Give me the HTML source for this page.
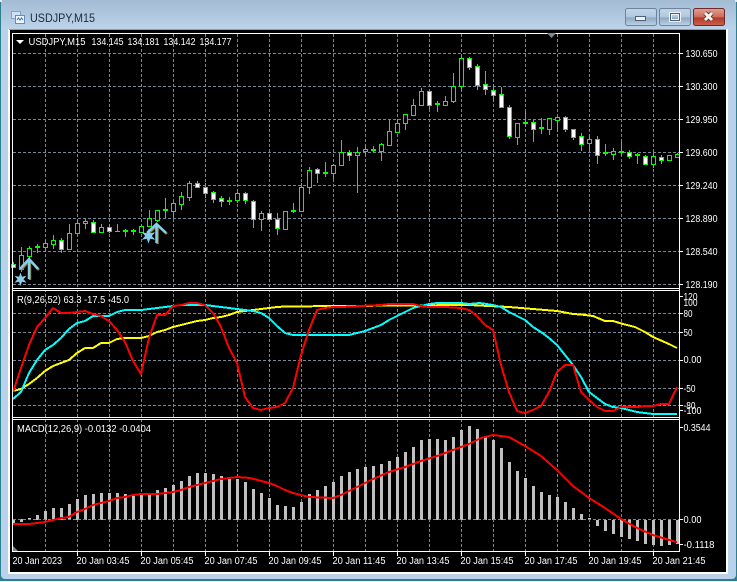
<!DOCTYPE html>
<html><head><meta charset="utf-8"><title>USDJPY,M15</title>
<style>
html,body{margin:0;padding:0;background:#b9d1ea}
svg{display:block}
text{font-family:"Liberation Sans",sans-serif;font-size:10px;fill:#fff}
</style></head><body>
<svg width="737" height="582" viewBox="0 0 737 582" xmlns="http://www.w3.org/2000/svg">
<defs>
<linearGradient id="tb" x1="0" y1="0" x2="0" y2="1"><stop offset="0" stop-color="#a3bcd4"/><stop offset="1" stop-color="#bcd3e9"/></linearGradient>
<linearGradient id="b1" x1="0" y1="0" x2="0" y2="1"><stop offset="0" stop-color="#c3d6e8"/><stop offset=".5" stop-color="#b0c8de"/><stop offset=".55" stop-color="#8fa9c4"/><stop offset="1" stop-color="#bcd2e6"/></linearGradient>
<linearGradient id="b2" x1="0" y1="0" x2="0" y2="1"><stop offset="0" stop-color="#e0a194"/><stop offset=".5" stop-color="#cf6a58"/><stop offset=".55" stop-color="#b3392a"/><stop offset="1" stop-color="#c9604d"/></linearGradient>
</defs>
<rect width="737" height="582" fill="#f0f0f0"/>
<rect x="0" y="0" width="737" height="581" fill="#2c7f8f"/>
<rect x="1" y="0" width="735" height="579" rx="4" fill="#b9d1ea"/>
<rect x="1" y="0" width="735" height="29" fill="url(#tb)"/>
<rect x="0" y="0" width="2" height="2" fill="#e8e8e8"/><rect x="735" y="0" width="2" height="2" fill="#e8e8e8"/>
<rect x="8" y="29" width="720" height="545" fill="#fff"/>
<rect x="9" y="29" width="717" height="1" fill="#8e9aa6"/>
<rect x="10" y="30" width="716" height="542" fill="#000"/>

<!-- title icon -->
<path d="M11.5 11.5h9v7h-9z" fill="#cfe2f5" stroke="#7fa5cc"/>
<path d="M15.5 15.500h9v8h-9z" fill="#eef5fc" stroke="#5f8fc0"/>
<path d="M17 20l1.500-2 1.500 2 1.500-2 1.500 2" fill="none" stroke="#3a74b0"/>
<text x="30" y="22" style="font-size:12px;fill:#1c2a38" textLength="65" lengthAdjust="spacingAndGlyphs">USDJPY,M15</text>

<!-- buttons -->
<rect x="625.5" y="8.5" width="31" height="17" rx="2" fill="url(#b1)" stroke="#6f849b"/>
<rect x="659.5" y="8.5" width="31" height="17" rx="2" fill="url(#b1)" stroke="#6f849b"/>
<rect x="693.5" y="8.5" width="31" height="17" rx="2" fill="url(#b2)" stroke="#6d2a2a"/>
<rect x="635.5" y="16.5" width="10" height="4" fill="#eef2f6" stroke="#4d5f73"/>
<rect x="670.5" y="13.5" width="9" height="7" fill="none" stroke="#eef2f6" stroke-width="3"/>
<rect x="670.5" y="13.5" width="9" height="7" fill="none" stroke="#4d5f73"/>
<path d="M705 13l7 7M712 13l-7 7" stroke="#5d2a24" stroke-width="4.5"/>
<path d="M705 13l7 7M712 13l-7 7" stroke="#f2f2f2" stroke-width="3"/>

<!-- grid -->
<g stroke="#778899" fill="none" stroke-dasharray="3 2">
<path d="M45.5 34V551M77.5 34V551M109.5 34V551M141.5 34V551M173.5 34V551M205.5 34V551M237.5 34V551M269.5 34V551M301.5 34V551M333.5 34V551M365.5 34V551M397.5 34V551M429.5 34V551M461.5 34V551M493.5 34V551M525.5 34V551M557.5 34V551M589.5 34V551M621.5 34V551M653.5 34V551"/>
<path d="M13 53.5H679M13 86.5H679M13 119.5H679M13 152.5H679M13 185.5H679M13 218.5H679M13 251.5H679M13 284.5H679"/>
<path d="M13 313.5H679M13 332.5H679M13 360.5H679M13 388.5H679M13 405.5H679"/>
<path d="M13 519.5H679"/>
</g>

<!-- wicks -->
<path stroke="#00ff00" fill="none" d="M13.5 262V268M21.5 247V272M29.5 246V258M37.5 244V253M45.5 240V252M53.5 235V249M61.5 238V253M69.5 224V250M77.5 220V234M85.5 219V229M93.5 220V233M101.5 224V233M109.5 225V233M117.5 224V232M125.5 229V237M133.5 229V235M141.5 225V233M149.5 210V227M157.5 210V222M165.5 198V218M173.5 202V218M181.5 192V210M189.5 181V201M197.5 181V187M205.5 183V198M213.5 191V203M221.5 196V207M229.5 197V205M237.5 192V203M245.5 192V204M253.5 200V228M261.5 211V231M269.5 212V220M277.5 213V235M285.5 211V230M293.5 203V213M301.5 183V211M309.5 167V194M317.5 168V183M325.5 162V177M333.5 164V179M341.5 140V165M349.5 150V161M357.5 147V193M365.5 145V155M373.5 146V152M381.5 143V161M389.5 120V146M397.5 120V133M405.5 114V130M413.5 99V116M421.5 88V105M429.5 91V109M437.5 101V112M445.5 96V106M453.5 73V103M461.5 57V90M469.5 57V70M477.5 64V90M485.5 71V95M493.5 85V102M501.5 87V107M509.5 105V139M517.5 123V145M525.5 111V127M533.5 120V142M541.5 118V134M549.5 118V135M557.5 116V132M565.5 116V132M573.5 129V140M581.5 133V151M589.5 135V150M597.5 136V164M605.5 144V156M613.5 148V160M621.5 142V156M629.5 150V159M637.5 153V164M645.5 155V164M653.5 153V168M661.5 155V164M669.5 155V161M677.5 153V157"/>
<!-- hollow bodies -->
<path fill="#000" stroke="#00ff00" d="M19.5 255.5h4v14h-4zM27.5 248.5h4v8h-4zM43.5 243.5h4v4h-4zM51.5 240.5h4v4h-4zM67.5 233.5h4v16h-4zM75.5 223.5h4v10h-4zM83.5 221.5h4v2h-4zM99.5 227.5h4v5h-4zM139.5 226.5h4v6h-4zM147.5 218.5h4v8h-4zM155.5 210.5h4v10h-4zM171.5 203.5h4v8h-4zM179.5 196.5h4v8h-4zM187.5 183.5h4v14h-4zM235.5 193.5h4v7h-4zM259.5 213.5h4v6h-4zM283.5 211.5h4v18h-4zM299.5 187.5h4v24h-4zM307.5 170.5h4v17h-4zM331.5 165.5h4v8h-4zM339.5 152.5h4v13h-4zM355.5 152.5h4v3h-4zM363.5 149.5h4v2h-4zM379.5 144.5h4v7h-4zM387.5 131.5h4v14h-4zM395.5 123.5h4v9h-4zM403.5 114.5h4v9h-4zM411.5 105.5h4v10h-4zM419.5 91.5h4v14h-4zM443.5 101.5h4v4h-4zM451.5 86.5h4v15h-4zM459.5 58.5h4v28h-4zM515.5 123.5h4v14h-4zM547.5 118.5h4v11h-4zM555.5 117.5h4v3h-4zM587.5 139.5h4v4h-4zM611.5 151.5h4v3h-4zM651.5 156.5h4v8h-4zM667.5 155.5h4v5h-4zM675.5 154.5h4v3h-4z"/>
<!-- white bodies -->
<path fill="#fff" stroke="#00ff00" d="M11.5 264.5h4v3h-4zM59.5 240.5h4v9h-4zM91.5 222.5h4v10h-4zM107.5 227.5h4v4h-4zM195.5 183.5h4v4h-4zM203.5 187.5h4v6h-4zM211.5 192.5h4v7h-4zM219.5 198.5h4v3h-4zM243.5 193.5h4v7h-4zM251.5 201.5h4v18h-4zM267.5 213.5h4v6h-4zM275.5 219.5h4v9h-4zM315.5 169.5h4v4h-4zM347.5 152.5h4v3h-4zM427.5 91.5h4v14h-4zM467.5 58.5h4v9h-4zM475.5 66.5h4v19h-4zM483.5 84.5h4v5h-4zM491.5 90.5h4v5h-4zM499.5 94.5h4v13h-4zM507.5 107.5h4v29h-4zM531.5 122.5h4v7h-4zM563.5 117.5h4v12h-4zM571.5 129.5h4v8h-4zM579.5 136.5h4v8h-4zM595.5 139.5h4v16h-4zM627.5 152.5h4v4h-4zM643.5 156.5h4v8h-4zM659.5 157.5h4v3h-4z"/>
<!-- ticks -->
<path fill="#00ff00" d="M35 246h5v2h-5zM115 231h5v1h-5zM123 230h5v2h-5zM131 230h5v2h-5zM163 209h5v2h-5zM227 200h5v2h-5zM291 210h5v2h-5zM323 172h5v2h-5zM371 149h5v2h-5zM435 103h5v2h-5zM523 122h5v2h-5zM539 127h5v2h-5zM603 152h5v2h-5zM619 151h5v2h-5zM635 154h5v2h-5z"/>

<!-- arrows -->
<g fill="none" stroke-width="2.5">
<g stroke="#8a7a3c" transform="translate(1,1)"><path d="M20 269L29 259L38 269M29 259V279"/><path d="M147 233L156.5 224L166 233M156.5 224V243"/></g>
<g stroke="#87ceeb"><path d="M20 269L29 259L38 269M29 259V279"/><path d="M147 233L156.5 224L166 233M156.5 224V243"/></g>
</g>
<path fill="#87ceeb" d="M20.5 272.5l1.5 4.3 4.5-1-3 3.4 3 3.4-4.5-.9-1.5 4.3-1.5-4.3-4.5.9 3-3.4-3-3.4 4.5 1z"/>
<path fill="#87ceeb" d="M148.5 228.5l1.7 4.8 5-1.1-3.4 3.8 3.4 3.8-5-1.1-1.7 4.8-1.7-4.8-5 1.1 3.4-3.8-3.4-3.8 5 1.1z"/>

<!-- RSI lines -->
<g fill="none" stroke-width="2" stroke-linejoin="round" shape-rendering="crispEdges">
<polyline stroke="#ffff00" points="13,391 21,389 29,384 37,378 45,371 53,366 61,363 69,360 77,353 85,348 93,348 101,343 109,343 117,339 125,338 133,338 141,338 149,336 157,332 165,330 173,327 181,325 189,323 197,321 205,320 213,318 221,317 229,315 237,312 245,311 253,310 261,309 269,308 277,307 285,306.5 341,306 469,305 509,307 533,309 557,311 573,314 581,314.5 593,316 605,321 613,321 623,324 635,327 645,332 653,337 669,344 677,348"/>
<polyline stroke="#00ffff" points="13,399 21,392 29,373 37,360 45,350 53,345 61,338 69,329 77,323 85,321 93,316 101,316 109,316 117,312 125,310 133,310 141,310 149,309 157,308 165,307 173,306 181,305 205,305 213,306 221,307 229,308 237,309 245,310 253,311 261,313 269,318 277,326 285,333 293,335 349,335 357,333 365,331 373,328 381,325 389,320 397,316 405,312 413,308 421,306 429,304 437,303 461,303 469,304 480,303 493,305 501,307 509,312 517,316 525,320 533,327 541,332 549,338 557,345 565,355 573,365 581,377 589,392 597,398 605,404 613,407 621,408 629,410 637,412 645,413 653,414 677,414"/>
<polyline stroke="#ff0000" points="13,392 21,368 29,345 37,327 45,318 53,308 61,313 69,313 77,312 85,311 93,314 101,316 109,321 117,330 125,342 133,361 141,374 149,338 157,315 165,315 173,306 181,305 189,303 197,303 205,305 213,313 221,327 229,348 237,363 245,397 253,408 261,410 269,408 277,407 285,403 293,388 301,355 309,330 317,310 325,308 333,307 341,307 381,305 389,304 413,304 421,306 429,307 445,307 461,308 469,310 477,316 485,325 493,330 501,365 509,392 517,411 525,413 533,410 541,406 549,392 557,372 565,365 573,365 581,392 589,400 597,407 605,411 613,411 621,407 637,407 645,406 653,406 661,404 669,404 677,387"/>
</g>

<!-- MACD bars -->
<path stroke="#c0c0c0" stroke-width="3" fill="none" d="M13.5 519V523M21.5 519V522M29.5 518V520M37.5 515V520M45.5 511V520M53.5 508V520M61.5 508V520M69.5 504V520M77.5 499V520M85.5 495V520M93.5 494V520M101.5 493V520M109.5 493V520M117.5 493V520M125.5 494V520M133.5 496V520M141.5 495V520M149.5 495V520M157.5 490V520M165.5 488V520M173.5 485V520M181.5 481V520M189.5 476V520M197.5 473V520M205.5 473V520M213.5 474V520M221.5 476V520M229.5 479V520M237.5 479V520M245.5 482V520M253.5 489V520M261.5 493V520M269.5 498V520M277.5 505V520M285.5 506V520M293.5 507V520M301.5 502V520M309.5 494V520M317.5 490V520M325.5 486V520M333.5 482V520M341.5 476V520M349.5 472V520M357.5 469V520M365.5 467V520M373.5 466V520M381.5 464V520M389.5 461V520M397.5 457V520M405.5 452V520M413.5 447V520M421.5 440V520M429.5 439V520M437.5 439V520M445.5 440V520M453.5 437V520M461.5 430V520M469.5 426V520M477.5 429V520M485.5 436V520M493.5 440V520M501.5 448V520M509.5 462V520M517.5 471V520M525.5 478V520M533.5 486V520M541.5 492V520M549.5 495V520M557.5 497V520M565.5 502V520M573.5 508V520M581.5 514V520M589.5 518V520M597.5 520V526M605.5 520V531M613.5 520V534M621.5 520V537M629.5 520V539M637.5 520V541M645.5 520V544M653.5 520V545M661.5 520V546M669.5 520V545M677.5 520V544"/>
<path stroke="#778899" stroke-dasharray="3 2" fill="none" d="M13 519.5H600"/>
<polyline fill="none" stroke="#ff0000" stroke-width="2" stroke-linejoin="round" shape-rendering="crispEdges" points="13,524 29,524 45,522 53,520 61,518 69,517 77,512 85,509 93,505 101,503 109,501 117,498 125,497 133,495 141,494 157,494 165,493 173,492 181,490 189,487 197,485 205,483 213,481 221,479 229,478 237,477 250,478 269,483 277,486 285,490 293,493 301,495 309,497 333,498 341,495 357,487 373,479 389,472 405,467 421,461 437,456 453,450 469,444 481,438 485,437 493,435 509,437 525,446 541,456 557,470 573,486 589,498 605,508 621,519 637,528 653,535 669,540 677,542"/>

<!-- frames -->
<rect x="10" y="288" width="716" height="3" fill="#000"/>
<rect x="10" y="417" width="716" height="3" fill="#000"/>
<path stroke="#fff" fill="none" d="M12.5 33.5H679.5V551.5H12.5ZM12 288.5H680M12 290.5H680M12 417.5H680M12 419.5H680"/>
<!-- ticks right -->
<path stroke="#fff" d="M680 53.5h3M680 86.5h3M680 119.5h3M680 152.5h3M680 185.5h3M680 218.5h3M680 251.5h3M680 284.5h3M680 296.5h3M680 313.5h3M680 332.5h3M680 360.5h3M680 388.5h3M680 405.5h3M680 410.5h3M680 427.5h3M680 519.5h3M680 544.5h3"/>
<path stroke="#fff" d="M77.5 552v4M141.5 552v4M205.5 552v4M269.5 552v4M333.5 552v4M397.5 552v4M461.5 552v4M525.5 552v4M589.5 552v4M653.5 552v4"/>
<!-- small triangles -->
<path fill="#778899" d="M547 33h9l-4.500 5z"/>
<path fill="#778899" d="M13 546l5 5h-5z"/>
<path fill="#fff" d="M16 40h8l-4 4z"/>

<!-- labels -->
<g lengthAdjust="spacingAndGlyphs">
<text x="28.500" y="45" textLength="57" lengthAdjust="spacingAndGlyphs">USDJPY,M15</text>
<text x="91.500" y="45" textLength="32" lengthAdjust="spacingAndGlyphs">134.145</text>
<text x="127.500" y="45" textLength="32" lengthAdjust="spacingAndGlyphs">134.181</text>
<text x="163.500" y="45" textLength="32" lengthAdjust="spacingAndGlyphs">134.142</text>
<text x="199.500" y="45" textLength="32" lengthAdjust="spacingAndGlyphs">134.177</text>
<text x="17" y="303" textLength="112" lengthAdjust="spacingAndGlyphs">R(9,26,52) 63.3 -17.5 -45.0</text>
<text x="17" y="432" textLength="134" lengthAdjust="spacingAndGlyphs">MACD(12,26,9) -0.0132 -0.0404</text>
<text x="685.500" y="57" textLength="32" lengthAdjust="spacingAndGlyphs">130.650</text>
<text x="685.500" y="90" textLength="32" lengthAdjust="spacingAndGlyphs">130.300</text>
<text x="685.500" y="123" textLength="32" lengthAdjust="spacingAndGlyphs">129.950</text>
<text x="685.500" y="156" textLength="32" lengthAdjust="spacingAndGlyphs">129.600</text>
<text x="685.500" y="189" textLength="32" lengthAdjust="spacingAndGlyphs">129.240</text>
<text x="685.500" y="222" textLength="32" lengthAdjust="spacingAndGlyphs">128.890</text>
<text x="685.500" y="255" textLength="32" lengthAdjust="spacingAndGlyphs">128.540</text>
<text x="685.500" y="288" textLength="32" lengthAdjust="spacingAndGlyphs">128.190</text>
<text x="683.500" y="300" textLength="14" lengthAdjust="spacingAndGlyphs">120</text>
<text x="683.500" y="306" textLength="14" lengthAdjust="spacingAndGlyphs">100</text>
<text x="683.500" y="317" textLength="9" lengthAdjust="spacingAndGlyphs">80</text>
<text x="683.500" y="336" textLength="9" lengthAdjust="spacingAndGlyphs">50</text>
<text x="683.500" y="363" textLength="18" lengthAdjust="spacingAndGlyphs">0.00</text>
<text x="683.500" y="392" textLength="12" lengthAdjust="spacingAndGlyphs">-50</text>
<text x="683.500" y="409" textLength="12" lengthAdjust="spacingAndGlyphs">-80</text>
<text x="683.500" y="414" textLength="18" lengthAdjust="spacingAndGlyphs">-100</text>
<text x="683.500" y="431" textLength="27" lengthAdjust="spacingAndGlyphs">0.3544</text>
<text x="683.500" y="523" textLength="18" lengthAdjust="spacingAndGlyphs">0.00</text>
<text x="683.500" y="548" textLength="31" lengthAdjust="spacingAndGlyphs">-0.1118</text>
<text x="12.500" y="564" textLength="49.500" lengthAdjust="spacingAndGlyphs">20 Jan 2023</text>
<text x="76.500" y="564" textLength="53" lengthAdjust="spacingAndGlyphs">20 Jan 03:45</text>
<text x="140.500" y="564" textLength="53" lengthAdjust="spacingAndGlyphs">20 Jan 05:45</text>
<text x="204.500" y="564" textLength="53" lengthAdjust="spacingAndGlyphs">20 Jan 07:45</text>
<text x="268.500" y="564" textLength="53" lengthAdjust="spacingAndGlyphs">20 Jan 09:45</text>
<text x="332.500" y="564" textLength="53" lengthAdjust="spacingAndGlyphs">20 Jan 11:45</text>
<text x="396.500" y="564" textLength="53" lengthAdjust="spacingAndGlyphs">20 Jan 13:45</text>
<text x="460.500" y="564" textLength="53" lengthAdjust="spacingAndGlyphs">20 Jan 15:45</text>
<text x="524.500" y="564" textLength="53" lengthAdjust="spacingAndGlyphs">20 Jan 17:45</text>
<text x="588.500" y="564" textLength="53" lengthAdjust="spacingAndGlyphs">20 Jan 19:45</text>
<text x="652.500" y="564" textLength="53" lengthAdjust="spacingAndGlyphs">20 Jan 21:45</text>
</g>
</svg>
</body></html>
